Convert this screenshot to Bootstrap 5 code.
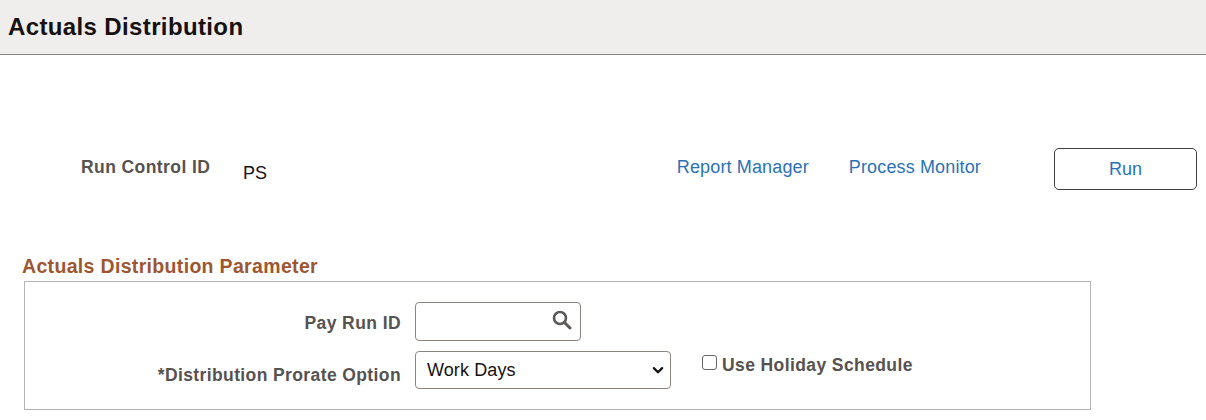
<!DOCTYPE html>
<html lang="en">
<head>
<meta charset="utf-8">
<title>Actuals Distribution</title>
<link rel="stylesheet" href="https://cdn.jsdelivr.net/npm/bootstrap@5.3.0/dist/css/bootstrap.min.css">
<style>
html, body { height: 420px; overflow: hidden; }
body { font-family: "Liberation Sans", Arial, sans-serif; background: #fff; font-size: 18px; color: #000; }
.page-head { height: 55px; background: #efeeec; border-bottom: 1px solid #8a8580; padding: 12px 8px 0; }
.page-title { font-size: 24px; font-weight: 700; letter-spacing: .37px; line-height: 30px; color: #161110; margin: 0; }
.run-row { margin-top: 93px; height: 42px; padding-left: 81px; padding-right: 9px; }
.lbl { font-weight: 700; font-size: 17.5px; letter-spacing: .42px; color: #565250; white-space: nowrap; line-height: 22px; }
.run-lbl { width: 162px; padding-top: 8px; }
.run-val { padding-top: 14px; line-height: 22px; font-size: 18px; color: #161110; }
.pt-link { color: #2a72b5; text-decoration: none; font-size: 18px; letter-spacing: .14px; line-height: 22px; padding-top: 8px; }
.link-one { margin-left: auto; }
.link-two { margin-left: 40px; margin-right: 73px; }
.run-btn { width: 143px; height: 42px; border: 1px solid #403e3c; border-radius: 5px; background: #fff; color: #2a72b5; font-size: 18px; padding: 0; }
.sect-title { margin: 64px 0 0 22px; font-size: 19.5px; font-weight: 700; letter-spacing: .33px; line-height: 24px; color: #9c5632; }
.sect-box { margin: 3px 115px 0 24px; height: 129px; border: 1px solid #b5b3b1; padding-top: 20px; }
.field-lbl { width: 376px; text-align: right; }
.field-row { height: 39px; }
.pay-lbl { padding-top: 10px; }
.lookup { width: 166px; height: 39px; margin-left: 14px; }
.lookup .form-control { height: 39px; border: 1px solid #8a8580; border-radius: 4px; padding: 0 36px 0 10px; box-shadow: none; }
.lookup svg { position: absolute; right: 9px; top: 8px; }
.opt-row { margin-top: 10px; }
.opt-lbl { padding-top: 13px; letter-spacing: .39px; }
.opt-select { width: 256px; height: 38px; border: 1px solid #8a8580; border-radius: 4px; padding: 0 30px 0 11px; font-size: 18px; line-height: 36px; letter-spacing: .1px; color: #161110; margin-left: 14px; background-position: right 5px center; background-size: 14px 12px; background-image: url("data:image/svg+xml,%3csvg xmlns='http://www.w3.org/2000/svg' viewBox='0 0 16 16'%3e%3cpath fill='none' stroke='%23111' stroke-linecap='round' stroke-linejoin='round' stroke-width='3' d='m2.5 5.5 5.5 5.5 5.5-5.5'/%3e%3c/svg%3e"); }
.chk-wrap { margin-left: 31px; padding-top: 3px; }
.chk-wrap .form-check-input { width: 15px; height: 15px; margin: 0 5px 5px 0; border: 1px solid #666; border-radius: 3px; flex: none; }
.chk-lbl { letter-spacing: .4px; }
</style>
</head>
<body>
<header class="page-head">
  <h1 class="page-title">Actuals Distribution</h1>
</header>
<main>
  <div class="run-row d-flex align-items-start">
    <div class="lbl run-lbl">Run Control ID</div>
    <div class="run-val">PS</div>
    <a class="pt-link link-one" href="#">Report Manager</a>
    <a class="pt-link link-two" href="#">Process Monitor</a>
    <button type="button" class="btn run-btn">Run</button>
  </div>
  <h2 class="sect-title">Actuals Distribution Parameter</h2>
  <section class="sect-box">
    <div class="field-row d-flex align-items-start">
      <label class="lbl field-lbl pay-lbl" for="payrun">Pay Run ID</label>
      <div class="lookup position-relative">
        <input id="payrun" type="text" class="form-control">
        <svg width="20" height="20" viewBox="0 0 20 20" aria-hidden="true"><circle cx="8" cy="8" r="6" fill="none" stroke="#5c5a58" stroke-width="2.6"/><line x1="12.5" y1="12.5" x2="18" y2="18" stroke="#5c5a58" stroke-width="3" stroke-linecap="round"/></svg>
      </div>
    </div>
    <div class="opt-row d-flex align-items-start">
      <label class="lbl field-lbl opt-lbl" for="prorate">*Distribution Prorate Option</label>
      <select id="prorate" class="form-select opt-select"><option>Work Days</option></select>
      <div class="chk-wrap d-flex align-items-center">
        <input id="hol" type="checkbox" class="form-check-input">
        <label class="lbl chk-lbl" for="hol">Use Holiday Schedule</label>
      </div>
    </div>
  </section>
</main>
<script src="https://cdn.jsdelivr.net/npm/bootstrap@5.3.0/dist/js/bootstrap.bundle.min.js"></script>
</body>
</html>
